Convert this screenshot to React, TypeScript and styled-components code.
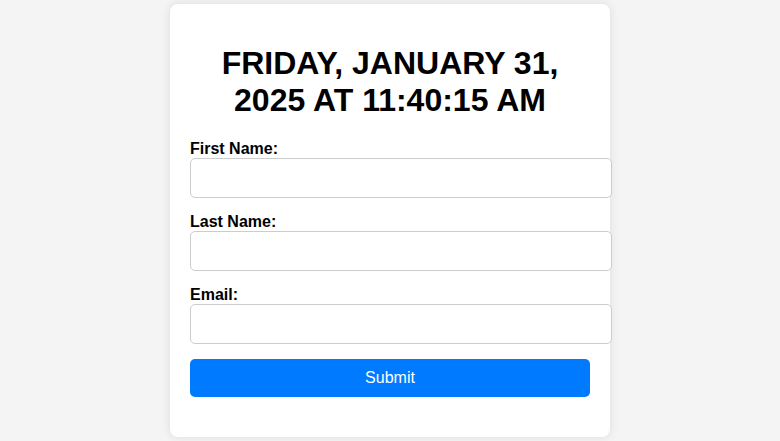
import styled, { createGlobalStyle } from 'styled-components';

const GlobalStyle = createGlobalStyle`
  body {
    margin: 0;
    font-family: "Liberation Sans", Arial, sans-serif;
    background: #f4f4f4;
  }
`;

const Page = styled.div`
  display: flex;
  justify-content: center;
  align-items: center;
  height: 100vh;
`;

const Card = styled.div`
  width: 400px;
  padding: 20px;
  background: #fff;
  border-radius: 8px;
  box-shadow: 0 0 10px rgba(0, 0, 0, 0.1);
`;

const Title = styled.h1`
  margin: 21px 0;
  font-size: 32px;
  line-height: 37px;
  text-align: center;
  text-transform: uppercase;
  color: #000;
`;

const Form = styled.form`
  padding-bottom: 20px;
`;

const Label = styled.label`
  display: block;
  font-size: 16px;
  font-weight: bold;
  line-height: 18px;
  color: #000;
`;

const Input = styled.input`
  display: block;
  width: 100%;
  margin: 0 0 15px;
  padding: 10px;
  font-family: inherit;
  font-size: 16px;
  line-height: 18px;
  border: 1px solid #ccc;
  border-radius: 5px;
`;

const Button = styled.button`
  display: block;
  width: 100%;
  padding: 10px;
  font-family: inherit;
  font-size: 16px;
  line-height: 18px;
  color: #fff;
  background: #007bff;
  border: none;
  border-radius: 5px;
  cursor: pointer;
`;

const fields = [
  { id: 'firstName', label: 'First Name:', type: 'text' },
  { id: 'lastName', label: 'Last Name:', type: 'text' },
  { id: 'email', label: 'Email:', type: 'email' },
];

function App() {
  return (
    <>
      <GlobalStyle />
      <Page>
        <Card>
          <Title>Friday, January 31, 2025 at 11:40:15 AM</Title>
          <Form onSubmit={(e) => e.preventDefault()}>
            {fields.map((f) => (
              <div key={f.id}>
                <Label htmlFor={f.id}>{f.label}</Label>
                <Input id={f.id} type={f.type} />
              </div>
            ))}
            <Button type="submit">Submit</Button>
          </Form>
        </Card>
      </Page>
    </>
  );
}

export default App;
